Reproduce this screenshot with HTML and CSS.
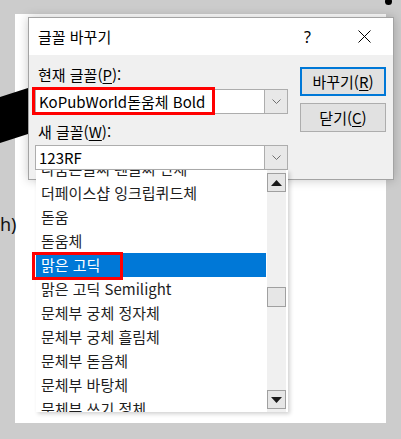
FILE: index.html
```html
<!DOCTYPE html>
<html lang="ko">
<head>
<meta charset="utf-8">
<title>글꼴 바꾸기</title>
<link rel="stylesheet" href="styles.css">
</head>
<body>
<div class="desk">
  <div class="page"></div>
  <span class="dot"></span>
  <svg class="arrow" width="28" height="56" viewBox="0 0 28 56"><polygon points="0,9 28,0 28,46 0,55"/></svg>
  <span class="stray">h)</span>

  <div class="dialog">
    <div class="titlebar">
      <span class="title">글꼴 바꾸기</span>
      <span class="help">?</span>
      <svg class="close" width="13" height="13" viewBox="0 0 13 13"><path d="M0.5 0.5 L12.5 12.5 M12.5 0.5 L0.5 12.5" stroke="#000" stroke-width="1" fill="none"/></svg>
    </div>
    <div class="body">
      <div class="fields">
        <div class="label label-first">현재 글꼴(<u>P</u>):</div>
        <div class="combo">
          <span class="value">KoPubWorld돋움체 Bold</span>
          <span class="drop"><svg width="9" height="5" viewBox="0 0 9 5"><path d="M0.5 0.5 L4.5 4.5 L8.5 0.5" stroke="#707070" fill="none"/></svg></span>
        </div>
        <div class="label label-second">새 글꼴(<u>W</u>):</div>
        <div class="combo combo-second">
          <span class="value">123RF</span>
          <span class="drop"><svg width="9" height="5" viewBox="0 0 9 5"><path d="M0.5 0.5 L4.5 4.5 L8.5 0.5" stroke="#707070" fill="none"/></svg></span>
        </div>
      </div>
      <div class="buttons">
        <button class="btn btn-default">바꾸기(<u>R</u>)</button>
        <button class="btn">닫기(<u>C</u>)</button>
      </div>
    </div>
  </div>

  <div class="dropdown">
    <div class="viewport">
      <ul class="items">
        <li>나눔손글씨 펜글씨 단체</li>
        <li>더페이스샵 잉크립퀴드체</li>
        <li>돋움</li>
        <li>돋움체</li>
        <li class="selected">맑은 고딕</li>
        <li>맑은 고딕 Semilight</li>
        <li>문체부 궁체 정자체</li>
        <li>문체부 궁체 흘림체</li>
        <li>문체부 돋음체</li>
        <li>문체부 바탕체</li>
        <li>문체부 쓰기 정체</li>
      </ul>
    </div>
    <div class="scrollbar">
      <span class="sb-btn"><svg width="11" height="6" viewBox="0 0 11 6"><polygon points="5.5,0 11,6 0,6" fill="#1a1a1a"/></svg></span>
      <span class="sb-track"><span class="thumb"></span></span>
      <span class="sb-btn"><svg width="11" height="6" viewBox="0 0 11 6"><polygon points="0,0 11,0 5.5,6" fill="#1a1a1a"/></svg></span>
    </div>
  </div>

  <div class="mark mark-current"></div>
  <div class="mark mark-selected"></div>
</div>
</body>
</html>
```

FILE: styles.css
```css
* { box-sizing: border-box; }
html, body { margin: 0; padding: 0; }
body {
  width: 401px;
  height: 439px;
  overflow: hidden;
  background: #cccccc;
  font-family: "Noto Sans CJK KR", "Noto Sans", sans-serif;
  color: #000;
}
.desk {
  position: relative;
  width: 401px;
  height: 439px;
  padding: 14px 0 0 15px;
}
.page {
  width: 371px;
  height: 409px;
  background: #fff;
}
.dot {
  position: absolute;
  left: 385px;
  top: -2px;
  width: 7px;
  height: 7px;
  border-radius: 50%;
  background: #000;
}
.arrow {
  position: absolute;
  left: 0;
  top: 88px;
}
.stray {
  position: absolute;
  left: 0;
  top: 212px;
  font-family: "Noto Sans", sans-serif;
  font-size: 18px;
  line-height: 24px;
  color: #111;
}

/* dialog window */
.dialog {
  position: absolute;
  left: 28px;
  top: 17px;
  width: 366px;
  height: 163px;
  border: 1px solid #a3a3a3;
  background: #f0f0f0;
  box-shadow: 0 0 10px rgba(0, 0, 0, 0.22);
  display: flex;
  flex-direction: column;
}
.titlebar {
  height: 37px;
  background: #fff;
  display: flex;
  align-items: center;
  padding-left: 9px;
  flex: none;
}
.title {
  font-size: 15px;
  line-height: 20px;
}
.help {
  margin-left: auto;
  width: 8px;
  font-family: "Noto Sans", sans-serif;
  font-size: 16px;
  line-height: 20px;
}
.close {
  margin-left: 46px;
  margin-right: 22px;
  display: block;
}
.body {
  flex: 1;
  display: flex;
  padding: 10px 6px 0 6px;
  overflow: hidden;
}
.fields {
  width: 253px;
  display: flex;
  flex-direction: column;
}
.label {
  font-size: 15px;
  line-height: 20px;
  padding-left: 3px;
}
.label u { text-underline-offset: 2px; }
.label-second { margin-top: 8px; }
.combo {
  margin-top: 4px;
  height: 25px;
  display: flex;
  background: #fff;
  border: 1px solid #adadad;
}
.combo-second { margin-top: 3px; }
.value {
  flex: 1;
  font-size: 15px;
  line-height: 23px;
  padding-left: 3px;
  white-space: nowrap;
}
.drop {
  width: 23px;
  border-left: 1px solid #adadad;
  background: #e8e8e8;
  display: flex;
  align-items: center;
  justify-content: center;
}
.drop svg { display: block; }

.buttons {
  margin-left: 12px;
  width: 86px;
  padding-top: 2px;
  display: flex;
  flex-direction: column;
  gap: 7px;
}
.btn {
  height: 29px;
  width: 86px;
  padding: 0;
  background: #e1e1e1;
  border: 1px solid #adadad;
  font-family: "Noto Sans CJK KR", "Noto Sans", sans-serif;
  font-size: 15px;
  line-height: 20px;
  color: #000;
}
.btn u { text-underline-offset: 2px; }
.btn-default { border: 2px solid #0078d7; }

/* dropdown list */
.dropdown {
  position: absolute;
  left: 36px;
  top: 170px;
  width: 252px;
  height: 242px;
  background: #fff;
  display: flex;
  box-shadow: 2px 2px 4px rgba(0, 0, 0, 0.18);
}
.viewport {
  width: 230px;
  overflow: hidden;
}
.items {
  list-style: none;
  margin: -13px 0 0;
  padding: 0;
}
.items li {
  height: 24px;
  line-height: 24px;
  padding-left: 5px;
  font-size: 15px;
  color: #1e1e1e;
  white-space: nowrap;
}
.items li.selected {
  background: #0078d7;
  color: #fff;
}
.scrollbar {
  width: 19px;
  margin-left: 1px;
  background: #f0f0f0;
  display: flex;
  flex-direction: column;
  padding: 3px 0 3px;
}
.sb-btn {
  height: 19px;
  flex: none;
  border: 1px solid #a0a0a0;
  background: #e6e6e6;
  display: flex;
  align-items: center;
  justify-content: center;
}
.sb-btn svg { display: block; }
.sb-track {
  flex: 1;
  padding-top: 95px;
}
.thumb {
  display: block;
  height: 20px;
  border: 1px solid #a0a0a0;
  background: #e6e6e6;
}

/* red annotation boxes */
.mark {
  position: absolute;
  border: 3px solid #ff0000;
}
.mark-current {
  left: 32px;
  top: 87px;
  width: 183px;
  height: 28px;
}
.mark-selected {
  left: 32px;
  top: 252px;
  width: 91px;
  height: 28px;
}
```
